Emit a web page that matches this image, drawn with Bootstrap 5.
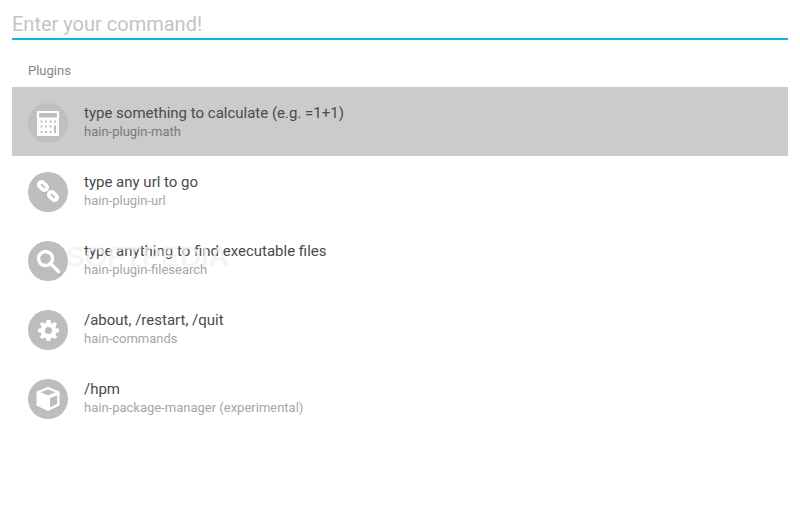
<!DOCTYPE html>
<html lang="en">
<head>
    <meta charset="UTF-8">
    <meta name="viewport" content="width=device-width, initial-scale=1.0">
    <title>Hain</title>
    <link href="https://cdn.jsdelivr.net/npm/bootstrap@5.3.3/dist/css/bootstrap.min.css" rel="stylesheet">
    <style>
        body { font-family: Roboto, "Liberation Sans", sans-serif; background: #fff; height: 510px; overflow: hidden; }
        .cmd-wrap { padding: 0 12px; }
        .cmd-input, .cmd-input:focus { height: 40px; padding: 10px 0 0; border: 0; border-bottom: 2px solid #00bcd4; border-radius: 0; box-shadow: none; font-size: 20px; line-height: 28px; color: #333; }
        .cmd-input::placeholder { color: #c4c4c4; opacity: 1; }
        .section-label { height: 47px; padding: 0 16px; font-size: 13px; line-height: 61px; color: #858585; }
        .result-list { border-radius: 0; }
        .result-item { height: 69px; padding: 16px 16px 13px; border: 0; gap: 16px; background: transparent; }
        .result-item.is-selected { background: #cbcbcb; }
        .result-icon { width: 40px; height: 40px; background: #bdbdbd; }
        .is-selected .result-icon { background: #bfbfbf; }
        .result-title { font-size: 15px; line-height: 20px; color: #4a4a4a; }
        .result-sub { font-size: 13px; line-height: 18px; color: #a6a6a6; }
        .is-selected .result-sub { color: #7a7a7a; }
        .watermark { position: absolute; left: 66px; top: 236px; font-family: "Liberation Sans", sans-serif; font-size: 28px; letter-spacing: .4px; color: rgba(255,255,255,.6); text-shadow: 0 0 1px rgba(205,205,205,.55); pointer-events: none; }
    </style>
</head>
<body>
    <div class="cmd-wrap">
        <input class="form-control cmd-input" type="text" placeholder="Enter your command!">
        <div class="section-label">Plugins</div>
        <div class="list-group result-list">
            <div class="list-group-item d-flex result-item is-selected">
                <div class="result-icon rounded-circle flex-shrink-0 d-flex align-items-center justify-content-center">
                    <svg width="24" height="25" viewBox="0 0 24 25"><path fill="#fff" fill-rule="evenodd" d="M1 0h22v25H1zM3 2v4.500h18V2zM4.500 9.500v2h2v-2zM9 9.500v2h2v-2zM13.500 9.500v2h2v-2zM18 9.500v2h2v-2zM4.500 14.500v2h2v-2zM9 14.500v2h2v-2zM13.500 14.500v2h2v-2zM18 14.500V22h2v-7.500zM4.500 20v2h2v-2zM9 20v2h2v-2zM13.500 20v2h2v-2z"/></svg>
                </div>
                <div>
                    <div class="result-title">type something to calculate (e.g. =1+1)</div>
                    <div class="result-sub">hain-plugin-math</div>
                </div>
            </div>
            <div class="list-group-item d-flex result-item">
                <div class="result-icon rounded-circle flex-shrink-0 d-flex align-items-center justify-content-center">
                    <svg class="mb-1" width="24" height="24" viewBox="0 -1 24 24" fill="none" stroke="#fff" stroke-width="3.600"><rect x="2.250" y="4.250" width="9.500" height="5.500" rx="2.750" transform="rotate(42 7 7)"/><rect x="12.250" y="14.250" width="9.500" height="5.500" rx="2.750" transform="rotate(42 17 17)"/></svg>
                </div>
                <div>
                    <div class="result-title">type any url to go</div>
                    <div class="result-sub">hain-plugin-url</div>
                </div>
            </div>
            <div class="list-group-item d-flex result-item">
                <div class="result-icon rounded-circle flex-shrink-0 d-flex align-items-center justify-content-center">
                    <svg width="24" height="24" viewBox="0 0 24 24" fill="none" stroke="#fff"><circle cx="9.500" cy="9.500" r="7" stroke-width="3.400"/><path d="M15 15l7.500 7.500" stroke-width="3.400" stroke-linecap="round"/></svg>
                </div>
                <div>
                    <div class="result-title">type anything to find executable files</div>
                    <div class="result-sub">hain-plugin-filesearch</div>
                </div>
            </div>
            <div class="list-group-item d-flex result-item">
                <div class="result-icon rounded-circle flex-shrink-0 d-flex align-items-center justify-content-center">
                    <svg width="21" height="21" viewBox="0 0 24 24"><path fill="#fff" fill-rule="evenodd" d="M10 0h4l.7 3.200 1.900.8 2.800-1.800 2.400 2.400-1.800 2.800.8 1.900 3.200.7v4l-3.200.7-.8 1.900 1.800 2.800-2.400 2.400-2.800-1.800-1.900.8-.7 3.200h-4l-.7-3.200-1.900-.8-2.800 1.800-2.400-2.400 1.800-2.800-.8-1.900L0 14v-4l3.200-.7.8-1.900L2.200 4.600l2.400-2.400 2.800 1.800 1.900-.8zM12 8a4 4 0 1 0 0 8 4 4 0 0 0 0-8z"/></svg>
                </div>
                <div>
                    <div class="result-title">/about, /restart, /quit</div>
                    <div class="result-sub">hain-commands</div>
                </div>
            </div>
            <div class="list-group-item d-flex result-item">
                <div class="result-icon rounded-circle flex-shrink-0 d-flex align-items-center justify-content-center">
                    <svg width="24" height="24" viewBox="0 0 24 24"><path fill="#fff" fill-rule="evenodd" d="M12 0l11.500 4.500v14L12 24 .5 18.500v-14zM12 2.500L4.500 5.300 12 8.300l7.500-3zM14 11.200v9l7.200-3.500V8.300z"/></svg>
                </div>
                <div>
                    <div class="result-title">/hpm</div>
                    <div class="result-sub">hain-package-manager (experimental)</div>
                </div>
            </div>
        </div>
    </div>
    <div class="watermark">SOFTPEDIA</div>
</body>
</html>
